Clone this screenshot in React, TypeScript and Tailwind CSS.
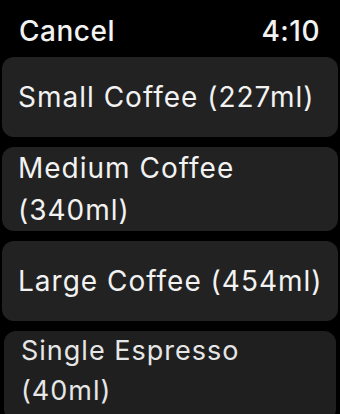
const drinks = [
  { name: "Small Coffee (227ml)" },
  { name: "Medium Coffee (340ml)" },
  { name: "Large Coffee (454ml)" },
];

export default function App() {
  return (
    <div
      className="w-[340px] h-[414px] overflow-hidden bg-black text-[#f2f2f2]"
      style={{ fontFamily: "Inter, 'Liberation Sans', sans-serif" }}
    >
      <div className="flex items-center justify-between pt-[10px] pl-[19px] pr-[20px] text-[28px] leading-[42px] font-medium tracking-[0.5px]">
        <span>Cancel</span>
        <span>4:10</span>
      </div>

      <div className="mt-[5px] flex flex-col gap-[10px]">
        {drinks.map((drink) => (
          <div
            key={drink.name}
            className="mx-[2px] min-h-[80px] flex items-center rounded-[12px] bg-[#222222] pl-[16px] pr-[12px] text-[28px] leading-[42px] tracking-[1px]"
          >
            {drink.name}
          </div>
        ))}
        <div className="mx-[4px] min-h-[90px] rounded-[12px] bg-[#1f1f1f] pl-[17px] pr-[12px] text-[27px] leading-[40px] tracking-[1px] text-[#e6e6e6]">
          Single Espresso (40ml)
        </div>
      </div>
    </div>
  );
}
